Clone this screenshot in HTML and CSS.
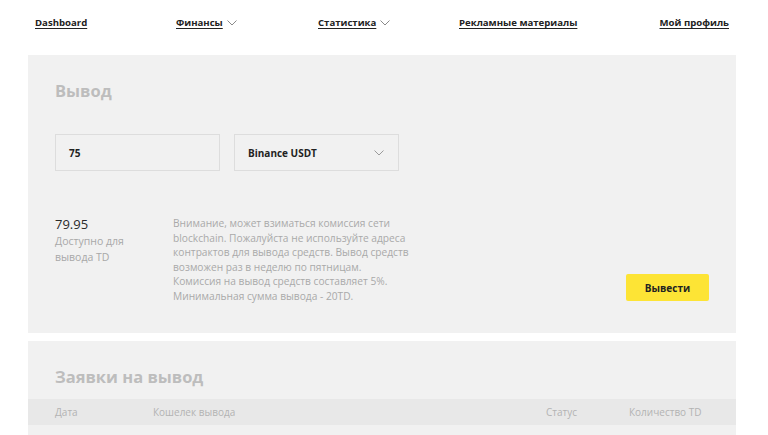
FILE: index.html
```html
<!DOCTYPE html>
<html lang="ru">
<head>
<meta charset="utf-8">
<title>Вывод</title>
<link rel="stylesheet" href="styles.css">
</head>
<body>
<nav class="nav">
  <a class="nav-link" href="#">Dashboard</a>
  <a class="nav-link" href="#">Финансы<svg class="nav-chev" viewBox="0 0 10 6" width="10" height="6"><path d="M0.5 0.5 L5 5 L9.5 0.5" fill="none" stroke="#8a8a8a" stroke-width="1"/></svg></a>
  <a class="nav-link" href="#">Статистика<svg class="nav-chev" viewBox="0 0 10 6" width="10" height="6"><path d="M0.5 0.5 L5 5 L9.5 0.5" fill="none" stroke="#8a8a8a" stroke-width="1"/></svg></a>
  <a class="nav-link" href="#">Рекламные материалы</a>
  <a class="nav-link nav-link-end" href="#">Мой профиль</a>
</nav>

<section class="panel panel-withdraw">
  <h2 class="panel-title">Вывод</h2>
  <div class="fields">
    <div class="field"><span class="field-value">75</span></div>
    <div class="field field-select"><span class="field-value">Binance USDT</span><svg class="select-chev" viewBox="0 0 10 6" width="10" height="6"><path d="M0.5 0.5 L5 5 L9.5 0.5" fill="none" stroke="#9a9a9a" stroke-width="1"/></svg></div>
  </div>
  <div class="info">
    <div class="balance">
      <div class="balance-amount">79.95</div>
      <div class="balance-label">Доступно для<br>вывода TD</div>
    </div>
    <p class="notice">Внимание, может взиматься комиссия сети blockchain. Пожалуйста не используйте адреса контрактов для вывода средств. Вывод средств возможен раз в неделю по пятницам.<br>Комиссия на вывод средств составляет 5%.<br>Минимальная сумма вывода - 20TD.</p>
    <button class="btn" type="button">Вывести</button>
  </div>
</section>

<section class="panel panel-requests">
  <h2 class="panel-title">Заявки на вывод</h2>
  <div class="table-head">
    <span>Дата</span>
    <span>Кошелек вывода</span>
    <span>Статус</span>
    <span>Количество TD</span>
  </div>
  <div class="table-body"></div>
</section>
</body>
</html>
```

FILE: styles.css
```css
html, body {
  margin: 0;
  padding: 0;
  background: #ffffff;
  font-family: "Open Sans", "DejaVu Sans", sans-serif;
  overflow: hidden;
}

.nav {
  display: grid;
  grid-template-columns: 141px 142px 141px 1fr auto;
  align-items: center;
  height: 45px;
  padding: 0 39px 0 35px;
}

.nav-link {
  display: flex;
  align-items: center;
  gap: 4px;
  justify-self: start;
  font-size: 9.6px;
  font-weight: 700;
  color: #222222;
  text-decoration: underline;
  text-underline-offset: 2px;
  text-decoration-thickness: 1px;
}

.nav-link-end {
  justify-self: end;
}

.nav-chev {
  display: block;
  margin-top: 1px;
}

.panel {
  background: #f1f1f1;
  margin: 0 32px 0 28px;
}

.panel-withdraw {
  margin-top: 10px;
  padding: 26px 27px 30px;
}

.panel-title {
  margin: 0;
  font-size: 16.5px;
  line-height: 20px;
  font-weight: 700;
  color: #bdbdbd;
}

.fields {
  display: flex;
  gap: 14px;
  margin-top: 33px;
}

.field {
  box-sizing: border-box;
  width: 165px;
  height: 37px;
  border: 1.5px solid #dddddd;
  display: flex;
  align-items: center;
  padding: 0 13px;
}

.field-select {
  justify-content: space-between;
  padding-right: 14px;
}

.field-value {
  font-size: 10px;
  font-weight: 700;
  color: #222222;
}

.select-chev {
  display: block;
}

.info {
  display: flex;
  align-items: flex-end;
  margin-top: 45px;
}

.balance {
  width: 118px;
  align-self: flex-start;
}

.balance-amount {
  font-size: 13px;
  line-height: 16px;
  color: #2a2a2a;
}

.balance-label {
  margin-top: 2px;
  font-size: 10.5px;
  line-height: 15.5px;
  color: #a8a8a8;
}

.notice {
  margin: 0;
  width: 240px;
  font-size: 10.2px;
  line-height: 14.5px;
  color: #a9a9a9;
}

.btn {
  margin-left: auto;
  margin-bottom: 2px;
  width: 83px;
  height: 27px;
  border: none;
  border-radius: 2px;
  background: #fde435;
  font-family: inherit;
  font-size: 10px;
  font-weight: 700;
  color: #222222;
  padding: 0;
}

.panel-requests {
  margin-top: 8px;
  padding-top: 26px;
}

.panel-requests .panel-title {
  padding: 0 27px;
}

.table-head {
  display: grid;
  grid-template-columns: 98px 1fr 83px 80px;
  align-items: center;
  height: 26px;
  margin-top: 12px;
  padding: 0 27px;
  background: #e8e8e8;
  font-size: 10px;
  color: #b3b3b3;
}

.table-body {
  height: 10px;
}
```
